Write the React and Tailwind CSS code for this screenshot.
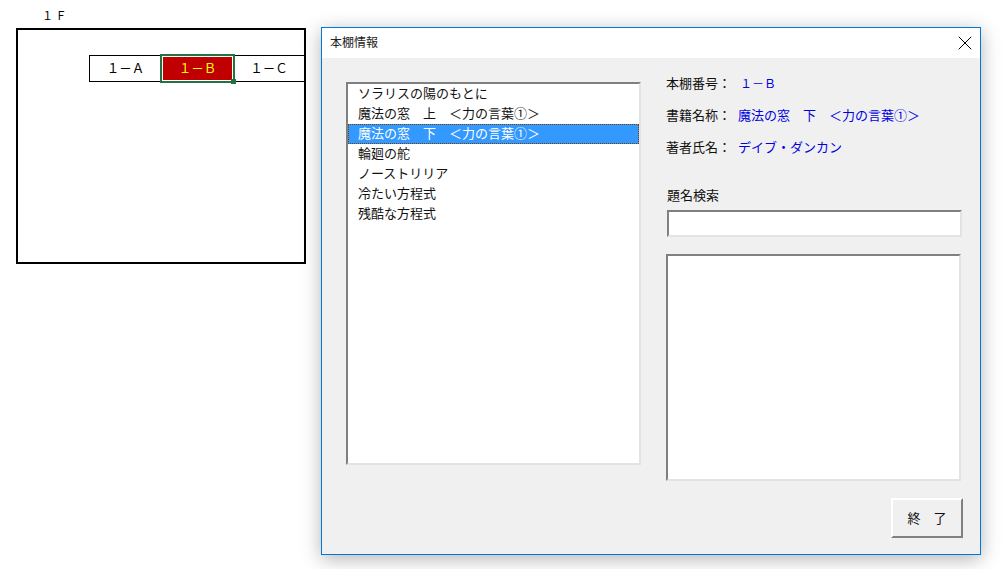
import React from 'react';
import { X } from 'lucide-react';

const books = [
  'ソラリスの陽のもとに',
  '魔法の窓　上　＜力の言葉①＞',
  '魔法の窓　下　＜力の言葉①＞',
  '輪廻の舵',
  'ノーストリリア',
  '冷たい方程式',
  '残酷な方程式',
];

const info = [
  { label: '本棚番号：', value: '１－Ｂ', valueClass: 'ml-[9px] text-[12px]' },
  { label: '書籍名称：', value: '魔法の窓　下　＜力の言葉①＞', valueClass: 'ml-[7px]' },
  { label: '著者氏名：', value: 'デイブ・ダンカン', valueClass: 'ml-[7px]' },
];

const font = "font-['Noto_Sans_CJK_JP','Liberation_Sans',sans-serif]";
const sunken = 'border-2 border-t-[#808080] border-l-[#808080] border-r-[#e3e3e3] border-b-[#e3e3e3] bg-white';

function Sheet() {
  return (
    <div className="w-[321px] shrink-0 pl-4 pt-[7px]">
      <div className="h-[21px] pl-[26px] text-[11px] leading-[17px] text-black">１ Ｆ</div>
      <div className="h-[236px] w-[290px] border-2 border-black bg-white pt-[25px] pl-[71px]">
        <div className="flex h-[27px] text-[12.5px] text-black">
          <div className="flex w-[72px] items-center justify-center border border-r-0 border-black">１－Ａ</div>
          <div className="relative z-10 -my-[1px] -ml-px flex h-[29px] w-[75px] -mr-[1px] items-center justify-center border-2 border-[#217346] bg-[#c00000] text-[#ffff00] outline outline-1 -outline-offset-3 outline-white">
            １－Ｂ
            <span className="absolute -right-[3px] -bottom-[3px] h-[5px] w-[5px] bg-[#217346]" />
          </div>
          <div className="flex flex-1 items-center justify-center border-y border-black">１－Ｃ</div>
        </div>
      </div>
    </div>
  );
}

function Dialog() {
  return (
    <div className="mt-[27px] flex h-[528px] w-[660px] flex-col border border-[#0078d7] bg-[#f0f0f0] shadow-[0_4px_18px_rgba(0,0,0,0.3)]">
      <div className="flex h-[30px] shrink-0 items-center justify-between bg-white pl-2 pr-[3px] text-[12px] leading-[16px] text-[#222]">
        <span className="-mt-[2px]">本棚情報</span>
        <X size={24} strokeWidth={1} className="text-black" />
      </div>
      <div className="flex flex-1 pl-6 pt-[15px]">
        <ul className={`mt-[9px] h-[383px] w-[295px] shrink-0 text-[13px] text-[#111] ${sunken}`}>
          {books.map((b, i) => (
            <li
              key={b}
              className={
                i === 2
                  ? 'h-[20px] whitespace-pre border border-dotted border-[#7a3c00] bg-[#3399ff] pl-[9px] leading-[16px] text-white'
                  : 'h-[20px] whitespace-pre pl-[10px] leading-[18px]'
              }
            >
              {b}
            </li>
          ))}
        </ul>
        <div className="ml-[25px] flex w-[297px] flex-col text-[13px]">
          <div className="flex flex-col gap-[12px]">
            {info.map((row) => (
              <div key={row.label} className="flex h-[20px] items-center whitespace-pre text-[#111]">
                <span>{row.label}</span>
                <span className={`text-[#0000e0] ${row.valueClass}`}>{row.value}</span>
              </div>
            ))}
          </div>
          <div className="mt-[28px] h-[20px] pl-px leading-[20px] text-[#111]">題名検索</div>
          <input className={`mt-[5px] ml-px h-[27px] w-[295px] outline-none ${sunken}`} />
          <textarea className={`mt-[17px] h-[227px] w-[295px] resize-none outline-none ${sunken}`} />
          <div className="mt-[17px] flex justify-end">
            <button className="h-[40px] w-[72px] border-2 border-t-white border-l-white border-r-[#808080] border-b-[#808080] bg-[#f0f0f0] text-[13px] text-[#111]">
              終　了
            </button>
          </div>
        </div>
      </div>
    </div>
  );
}

export default function App() {
  return (
    <div className={`flex h-[569px] w-[1003px] overflow-hidden bg-white ${font}`}>
      <Sheet />
      <Dialog />
    </div>
  );
}
